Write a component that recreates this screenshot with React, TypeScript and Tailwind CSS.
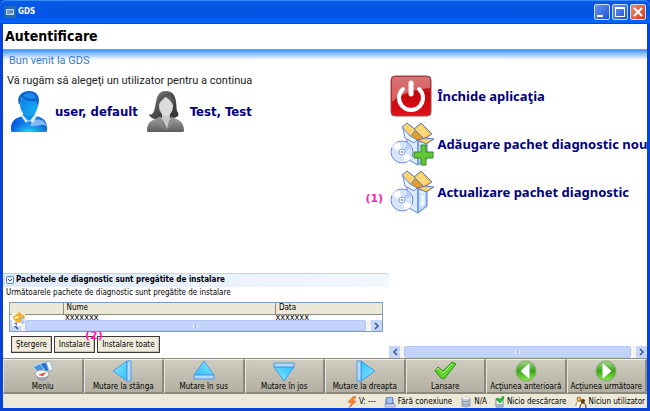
import type { ReactNode } from "react";

function AppIcon() {
  return (
    <svg viewBox="0 0 12 12" className="size-3 shrink-0" aria-hidden="true">
      <rect width="12" height="12" fill="#2469b4" />
      <rect x="2" y="3" width="8" height="6" fill="#b9d7f2" />
      <path d="M3 5h2M3 7h2M6 4v4M8 4v3M9 5l-2 2" stroke="#1d5296" strokeWidth="1" fill="none" />
    </svg>
  );
}

function ManIcon() {
  return (
    <svg viewBox="0 0 40 42" className="h-[42px] w-10 shrink-0" aria-hidden="true">
      <defs>
        <linearGradient id="manBody" x1="0" y1="0" x2="1" y2="0">
          <stop offset="0" stopColor="#0a4fd8" />
          <stop offset="0.5" stopColor="#1286ef" />
          <stop offset="1" stopColor="#1761d6" />
        </linearGradient>
        <radialGradient id="manGlow" cx="0.5" cy="1" r="0.6">
          <stop offset="0" stopColor="#19e0e6" />
          <stop offset="1" stopColor="#19a0f0" stopOpacity="0" />
        </radialGradient>
        <linearGradient id="manFace" x1="0" y1="0" x2="1" y2="1">
          <stop offset="0" stopColor="#0f7be6" />
          <stop offset="1" stopColor="#16b3f2" />
        </linearGradient>
      </defs>
      <path d="M0 40C-1 31 4 26 13 25L19 30L24 25C33 26 37 31 36 40Q36 41 34 41H2Q0 41 0 40Z" fill="url(#manBody)" />
      <path d="M0 40C-1 31 4 26 13 25L19 30L24 25C33 26 37 31 36 40Q36 41 34 41H2Q0 41 0 40Z" fill="url(#manGlow)" />
      <path d="M21 30C27 27 34 28 36 36C32 31 27 36 19 35Z" fill="#9cc8fa" opacity="0.8" />
      <path d="M12 20h12v5l-5 7l-7-7Z" fill="#0f8ee8" />
      <path d="M10 25l1-2l7 8l6-8l2 2l-4 7l-4-3l-3 3Z" fill="#d6eeff" />
      <ellipse cx="18" cy="14" rx="9" ry="11" fill="url(#manFace)" />
      <path d="M8 14C5 5 11 0 18 0C26 0 30 6 27 15L25 10C20 11 14 10 11 6C10 9 10 11 8 14Z" fill="#0a63cf" />
      <path d="M12 4C16 1 23 1 25 7C20 8 15 8 12 4Z" fill="#1e8bf0" />
    </svg>
  );
}

function WomanIcon() {
  return (
    <svg viewBox="0 0 40 42" className="h-[42px] w-10 shrink-0" aria-hidden="true">
      <defs>
        <linearGradient id="womanHair" x1="0" y1="0" x2="1" y2="1">
          <stop offset="0" stopColor="#8a8a8a" />
          <stop offset="0.5" stopColor="#4c4c4c" />
          <stop offset="1" stopColor="#303030" />
        </linearGradient>
        <linearGradient id="womanBody" x1="0" y1="0" x2="0" y2="1">
          <stop offset="0" stopColor="#a5a5a5" />
          <stop offset="1" stopColor="#5c5c5c" />
        </linearGradient>
      </defs>
      <path d="M20 0C9 0 11 12 8 20C6 24 5 24 3 23C4 28 10 29 15 27H28C32 26 34 24 31 20C30 12 31 0 20 0Z" fill="url(#womanHair)" />
      <path d="M1 40C1 31 5 29 15 26L20 33L25 26C34 29 38 31 38 40Q38 41 36 41H3Q1 41 1 40Z" fill="url(#womanBody)" />
      <path d="M16 20h8v6l-3 12l-5-12Z" fill="#c9c9c9" />
      <path d="M13 25l6 14l-8-9ZM26 25l-5 14l8-9Z" fill="#8d8d8d" />
      <ellipse cx="20" cy="15" rx="7" ry="10" fill="#dcdcdc" />
      <path d="M12 15C12 8 14 4 19 3C25 3 28 8 28 16C26 12 24 8 19 6C17 9 14 10 12 15Z" fill="#5a5a5a" />
    </svg>
  );
}

function PowerIcon() {
  return (
    <svg viewBox="0 0 42 42" className="size-[42px] shrink-0" aria-hidden="true">
      <defs>
        <linearGradient id="power" x1="0" y1="0" x2="0" y2="1">
          <stop offset="0" stopColor="#b83236" />
          <stop offset="0.5" stopColor="#c4060c" />
          <stop offset="1" stopColor="#e11218" />
        </linearGradient>
      </defs>
      <rect x="1" y="1" width="40" height="40" rx="4" fill="url(#power)" stroke="#a04a4c" />
      <path d="M2 27V5Q2 2 5 2H37Q40 2 40 5V13C26 14 12 18 2 27Z" fill="#f3b5b5" opacity="0.5" />
      <path d="M13 14A12 12 0 1 0 29 14" fill="none" stroke="#fff" strokeWidth="4" strokeLinecap="round" />
      <path d="M21 8v11" stroke="#fff" strokeWidth="5" strokeLinecap="round" />
    </svg>
  );
}

function PackageIcon({ plus }: { plus?: boolean }) {
  return (
    <svg viewBox="0 0 46 44" className="-mr-1 h-11 w-[46px] shrink-0" aria-hidden="true">
      <path d="M17 9L28 18V43L17 37Z" fill="#dcebfb" stroke="#5f88dc" />
      <path d="M28 18L37 15V36L28 43Z" fill="#b9d8f8" stroke="#4a76d4" />
      <path d="M30 21l5-2v15l-5 4Z" fill="#e7f4fe" />
      <path d="M20 12L25 7L36 16L27 20Z" fill="#e59d24" />
      <path d="M12 5L17 1L26 8L20 15Z" fill="#ffd56a" stroke="#4f78d0" />
      <path d="M24 7L31 1L42 12L34 17Z" fill="#ffc54c" stroke="#4f78d0" />
      <path d="M26 8L31 3L39 12L33 15Z" fill="#ffd97c" />
      <path d="M27 18L36 16L44 17L36 22Z" fill="#ffd05e" stroke="#4f78d0" />
      <path d="M13 6L20 14L27 18L24 21L15 16Z" fill="#f1f7fe" stroke="#5f88dc" />
      <circle cx="12" cy="30" r="11" fill="#d6e5fa" stroke="#7089dc" />
      <path d="M12 30L2 25A11 11 0 0 1 9 20ZM12 30L22 35A11 11 0 0 1 15 40Z" fill="#fff" />
      <path d="M12 30L18 21A11 11 0 0 1 22 26Z" fill="#b6cdf6" />
      <circle cx="12" cy="30" r="3" fill="#f4f8fe" stroke="#8ba3d8" />
      <circle cx="12" cy="30" r="1" fill="#7089b8" />
      {plus ? (
        <path d="M31 23h5v7h7v6h-7v7h-5v-7h-7v-6h7Z" fill="#63c637" stroke="#2e8a1c" strokeLinejoin="round" />
      ) : (
        <path d="M31 24h3v8h2l-4 5l-3-4h2Z" fill="#fff" stroke="#c2dbf8" />
      )}
    </svg>
  );
}

function TriangleIcon({ direction }: { direction: "left" | "up" | "down" | "right" }) {
  const turn = { left: 0, up: 90, right: 180, down: 270 }[direction];
  return (
    <svg viewBox="0 0 22 22" className="size-[22px]" aria-hidden="true">
      <defs>
        <linearGradient id={"tri-" + direction} x1="0" y1="0" x2="1" y2="1">
          <stop offset="0" stopColor="#8de8ff" />
          <stop offset="1" stopColor="#2cc0fb" />
        </linearGradient>
      </defs>
      <g transform={`rotate(${turn} 11 11)`} stroke="#4a98e8" strokeLinejoin="round">
        <path d="M1 11L15 1V21Z" fill={"url(#tri-" + direction + ")"} />
        <path d="M15 1h4v20h-4Z" fill="#b4dafb" />
      </g>
    </svg>
  );
}

function MenuIcon() {
  return (
    <svg viewBox="0 0 22 22" className="size-[22px]" aria-hidden="true">
      <path d="M1 7L9 3L14 9L6 12Z" fill="#3f94e6" stroke="#d3e5f6" />
      <path d="M8 4L13 2L19 9L14 12Z" fill="#1f78d6" stroke="#b9d7f3" />
      <path d="M14 2l4-1l3 9l-4 1Z" fill="#f2f6fb" stroke="#8ba6c6" strokeWidth="0.8" />
      <path d="M4 14h13v2q-2 5-7 5t-6-5Z" fill="#9ea3aa" />
      <ellipse cx="10" cy="14" rx="7" ry="4" fill="#f4f5f7" stroke="#9a9da2" />
      <path d="M6 15l8-3l-3 4Z" fill="#e8481c" />
    </svg>
  );
}

function CheckIcon() {
  return (
    <svg viewBox="0 0 24 22" className="h-[22px] w-6" aria-hidden="true">
      <path d="M2 11L5 7L10 11L19 2L23 4L11 19L8 18Z" fill="#5fd52c" stroke="#2f8f1c" strokeLinejoin="round" />
      <path d="M4 10L5 8L10 13L19 4" fill="none" stroke="#b2f08c" />
    </svg>
  );
}

function RoundArrow({ back }: { back?: boolean }) {
  const id = back ? "roundBack" : "roundNext";
  return (
    <svg viewBox="0 0 22 22" className="size-[22px]" aria-hidden="true">
      <defs>
        <linearGradient id={id} x1="0" y1="0" x2="0" y2="1">
          <stop offset="0" stopColor="#a8d98c" />
          <stop offset="0.5" stopColor="#3aa51a" />
          <stop offset="1" stopColor="#8bea4c" />
        </linearGradient>
      </defs>
      <circle cx="11" cy="11" r="10" fill={"url(#" + id + ")"} stroke="#7fae68" />
      <path d={back ? "M6 11L14 4V18Z" : "M16 11L8 4V18Z"} fill="#fff" stroke="#fff" strokeLinejoin="round" />
    </svg>
  );
}

function BoltIcon() {
  return (
    <svg viewBox="0 0 10 12" className="h-3 w-2.5" aria-hidden="true">
      <path d="M7 0L1 6L5 7L2 12L9 5L5 5L9 1Z" fill="#ff8b1a" stroke="#ee4a10" strokeWidth="0.6" />
    </svg>
  );
}

function LinkStateIcon() {
  return (
    <svg viewBox="0 0 12 12" className="size-3" aria-hidden="true">
      <path d="M2 1h7l1 7H1Z" fill="#6f8ccc" />
      <path d="M3 2h5v5H3Z" fill="#a9c0ea" />
      <path d="M1 8h10v3H1Z" fill="#d5dbe8" stroke="#6d7fa3" strokeWidth="0.6" />
    </svg>
  );
}

function DatabaseIcon() {
  return (
    <svg viewBox="0 0 12 12" className="size-3" aria-hidden="true">
      <path d="M2 2q4-2 8 0v8q-4 2-8 0Z" fill="#c3cbd8" stroke="#7b879b" strokeWidth="0.7" />
      <path d="M2 5q4 2 8 0M2 8q4 2 8 0" fill="none" stroke="#6f7d94" strokeWidth="0.8" />
      <ellipse cx="6" cy="2" rx="4" ry="1" fill="#f1f4f9" />
    </svg>
  );
}

function DownloadIcon() {
  return (
    <svg viewBox="0 0 10 12" className="h-3 w-2.5" aria-hidden="true">
      <path d="M1 3h7v8H1Z" fill="#eef2f5" stroke="#6f8a97" />
      <path d="M2 8h5v2H2Z" fill="#9db2bd" />
      <path d="M1 3L3 2L5 4L8 0L9 2L5 7Z" fill="#1ec22a" stroke="#128a1d" strokeWidth="0.6" />
    </svg>
  );
}

function UsersIcon() {
  return (
    <svg viewBox="0 0 12 12" className="size-3" aria-hidden="true">
      <circle cx="4" cy="3" r="2" fill="#f2b45a" stroke="#7a4b12" strokeWidth="0.6" />
      <path d="M1 10q0-5 3-5t3 4" fill="#fff" stroke="#c77a1c" />
      <circle cx="8" cy="5" r="2" fill="#5a3413" />
      <path d="M5 12q0-5 3-5t3 5" fill="#f6e6c8" stroke="#3b2a18" />
    </svg>
  );
}

function UpdateIcon() {
  return (
    <svg viewBox="0 0 14 16" className="h-4 w-3.5" aria-hidden="true">
      <path d="M0 2h13v10h-4v3H0Z" fill="#fff" />
      <path d="M1 6L7 1L13 5L12 9L7 12L3 10Z" fill="#f8b526" />
      <path d="M1 6L6 4L8 7L3 9ZM8 3l4 2l-3 2Z" fill="#ffe28a" stroke="#e38a10" strokeWidth="0.6" />
      <path d="M9 7h3v5H9Z" fill="#cfe2fb" stroke="#6f96d8" strokeWidth="0.6" />
      <path d="M2 12l3-1v4Z" fill="#5a7dd0" />
    </svg>
  );
}

function Chevron({ back }: { back?: boolean }) {
  return (
    <svg viewBox="0 0 6 8" className="h-2 w-1.5" aria-hidden="true">
      <path d={back ? "M5 1L2 4L5 7" : "M1 1L4 4L1 7"} fill="none" stroke="#3a5688" strokeWidth="1.5" />
    </svg>
  );
}

function ScrollBar() {
  return (
    <div className="flex h-full w-full gap-px bg-[#f4f3ee]">
      <button type="button" aria-label="Derulare la stânga" className="flex w-[11px] items-center justify-center bg-[#c5d5fb]">
        <Chevron back />
      </button>
      <div className="ml-[3px] flex flex-1 items-center justify-center gap-px rounded-xs border border-[#b3c8f8] bg-[#c3d4fc]">
        <i className="h-1 w-px bg-[#eef3fe]" />
        <i className="h-1 w-px bg-[#9cb4ec]" />
        <i className="h-1 w-px bg-[#eef3fe]" />
      </div>
      <button type="button" aria-label="Derulare la dreapta" className="ml-1 flex w-[11px] items-center justify-center bg-[#c5d5fb]">
        <Chevron />
      </button>
    </div>
  );
}

const bold = "font-bold text-[13px] leading-4 text-[#000080] whitespace-nowrap";

function UserButton({ icon, name }: { icon: ReactNode; name: string }) {
  return (
    <button type="button" className="flex items-center gap-1">
      {icon}
      <span className={bold}>{name}</span>
    </button>
  );
}

function ActionButton({ icon, label }: { icon: ReactNode; label: string }) {
  return (
    <button type="button" className="flex h-12 items-center gap-[5px]">
      {icon}
      <span className={bold + " font-['Noto_Sans',sans-serif]"}>{label}</span>
    </button>
  );
}

const windowButton = "flex size-4 rounded-xs border border-[#c8dcfb]";

const callout = "absolute font-['DejaVu_Sans',sans-serif] text-[11px] leading-3 font-bold text-[#ff1eb4]";

const toolbar: { label: string; icon: ReactNode }[] = [
  { label: "Meniu", icon: <MenuIcon /> },
  { label: "Mutare la stânga", icon: <TriangleIcon direction="left" /> },
  { label: "Mutare în sus", icon: <TriangleIcon direction="up" /> },
  { label: "Mutare în jos", icon: <TriangleIcon direction="down" /> },
  { label: "Mutare la dreapta", icon: <TriangleIcon direction="right" /> },
  { label: "Lansare", icon: <CheckIcon /> },
  { label: "Acţiunea anterioară", icon: <RoundArrow back /> },
  { label: "Acţiunea următoare", icon: <RoundArrow /> },
];

const status: { label: string; icon: ReactNode }[] = [
  { label: "V: ---", icon: <BoltIcon /> },
  { label: "Fără conexiune", icon: <LinkStateIcon /> },
  { label: "N/A", icon: <DatabaseIcon /> },
  { label: "Nicio descărcare", icon: <DownloadIcon /> },
  { label: "Niciun utilizator", icon: <UsersIcon /> },
];

const smallButton = "h-[17px] border border-[#3c3c3c] bg-[#f0ecdc] px-1 shadow-[inset_-1px_-1px_0_#c8c4b2]";

export default function App() {
  return (
    <div className="flex h-screen flex-col overflow-hidden bg-[#0842d8] font-['DejaVu_Sans_Condensed','DejaVu_Sans',sans-serif] text-[8px] leading-[10px] text-black">
      <header className="flex h-6 shrink-0 items-center gap-0.5 rounded-t-md bg-linear-to-b from-[#0a5be8] via-[#0054e3] via-60% to-[#0068ff] pr-1 pl-1 shadow-[inset_0_1px_0_#3a8cf8,inset_0_-1px_0_#0648c8]">
        <AppIcon />
        <span className="flex-1 font-bold text-white">GDS</span>
        <div className="flex gap-0.5">
          <button type="button" aria-label="Minimizare" className={windowButton + " items-end bg-linear-to-br from-[#6b95f3] to-[#1f4fd0] p-0.5"}>
            <i className="h-0.5 w-1.5 bg-white" />
          </button>
          <button type="button" aria-label="Maximizare" className={windowButton + " items-center justify-center bg-linear-to-br from-[#6b95f3] to-[#1f4fd0]"}>
            <i className="size-2.5 border border-t-2 border-white" />
          </button>
          <button type="button" aria-label="Închidere" className={windowButton + " items-center justify-center bg-linear-to-br from-[#f08a6c] to-[#d13a14]"}>
            <svg viewBox="0 0 10 10" className="size-2.5" aria-hidden="true">
              <path d="M1 1L9 9M9 1L1 9" stroke="#fff" strokeWidth="2" />
            </svg>
          </button>
        </div>
      </header>

      <div className="mx-[3px] mb-[3px] flex min-h-0 flex-1 flex-col bg-white">
        <h1 className="h-[26px] shrink-0 border-b border-[#8c9aa0] pl-0.5 text-[14px] leading-[25px] font-bold">Autentificare</h1>

        <main className="flex min-h-0 flex-1 bg-linear-to-b from-[#3f94f8] to-white to-[10px]">
          <section className="flex min-w-0 flex-3 flex-col">
            <div className="flex-1 pl-1 font-[Roboto,sans-serif] text-[11px]">
              <h2 className="pt-[5px] pl-0.5 leading-3 text-[#3c78cc]">Bun venit la GDS</h2>
              <p className="mt-2 leading-3 text-[#222]">Vă rugăm să alegeţi un utilizator pentru a continua</p>
              <div className="mt-1 flex gap-2 pl-1 font-['DejaVu_Sans_Condensed','DejaVu_Sans',sans-serif]">
                <UserButton icon={<ManIcon />} name="user, default" />
                <UserButton icon={<WomanIcon />} name="Test, Test" />
              </div>
            </div>

            <section className="pb-[5px]">
              <h3 className="flex h-[14px] items-center gap-0.5 rounded-tr-sm border-t border-[#b9d2f5] bg-linear-to-r from-[#dfeafb] to-[#f3f8ff] pl-[3px] font-bold">
                <svg viewBox="0 0 8 8" className="size-2" aria-hidden="true">
                  <rect x="0.5" y="0.5" width="7" height="7" rx="1" fill="#e8f0fd" stroke="#5582c8" />
                  <path d="M2 3L4 5L6 3" fill="none" stroke="#1d4fa8" />
                </svg>
                Pachetele de diagnostic sunt pregătite de instalare
              </h3>
              <p className="mt-px pl-[3px]">Următoarele pachete de diagnostic sunt pregătite de instalare</p>
              <div className="relative mx-1.5 mt-1 border border-[#7f9db9]">
                <table className="w-full table-fixed border-collapse text-left">
                  <thead>
                    <tr className="h-[12px] bg-[#ebe8d8]">
                      <td className="w-[53px] border-b border-[#8c8a7c]" />
                      <th className="border-b border-l border-[#8c8a7c] p-0 pl-[3px] font-normal">Nume</th>
                      <th className="w-[107px] border-b border-l border-[#8c8a7c] p-0 pl-[3px] font-normal">Data</th>
                    </tr>
                  </thead>
                  <tbody>
                    <tr className="text-[9px] leading-[5px]">
                      <td className="p-0" />
                      <td className="p-0 pl-0.5">xxxxxxx</td>
                      <td className="p-0">xxxxxxx</td>
                    </tr>
                  </tbody>
                </table>
                <div className="h-[11px]"><ScrollBar /></div>
                <div className="absolute top-2 left-0.5"><UpdateIcon /></div>
              </div>
              <div className="relative mt-1 ml-2 flex gap-0.5">
                <button type="button" className={smallButton}>Ştergere</button>
                <button type="button" className={smallButton}>Instalare</button>
                <button type="button" className={smallButton}>Instalare toate</button>
                <span className={callout + " -top-1.5 left-[74px]"}>(2)</span>
              </div>
            </section>
          </section>

          <section className="flex min-w-0 flex-2 flex-col">
            <div className="relative flex flex-1 flex-col items-start pt-[22px] pl-px">
              <ActionButton icon={<PowerIcon />} label="Închide aplicaţia" />
              <ActionButton icon={<PackageIcon plus />} label="Adăugare pachet diagnostic nou" />
              <ActionButton icon={<PackageIcon />} label="Actualizare pachet diagnostic" />
              <span className={callout + " top-[143px] -left-6"}>(1)</span>
            </div>
            <div className="h-3"><ScrollBar /></div>
          </section>
        </main>

        <nav className="grid h-9 shrink-0 grid-cols-8 border-t border-[#8f8d82] bg-[#77756a]">
          {toolbar.map((item) => (
            <button
              key={item.label}
              type="button"
              className="flex min-w-0 flex-col items-center border-t border-r-2 border-b-2 border-l border-t-[#f3f1e8] border-r-[#8b897d] border-b-[#8b897d] border-l-[#e8e6dc] bg-linear-to-b from-[#cfccc0] to-[#b3b0a2] whitespace-nowrap"
            >
              {item.icon}
              <span>{item.label}</span>
            </button>
          ))}
        </nav>

        <footer className="flex h-[14px] shrink-0 items-center justify-end gap-2 bg-[#ece9d8] pt-px pr-0.5">
          {status.map((item) => (
            <span key={item.label} className="flex items-center gap-0.5 whitespace-nowrap">
              {item.icon}
              {item.label}
            </span>
          ))}
        </footer>
      </div>
    </div>
  );
}
